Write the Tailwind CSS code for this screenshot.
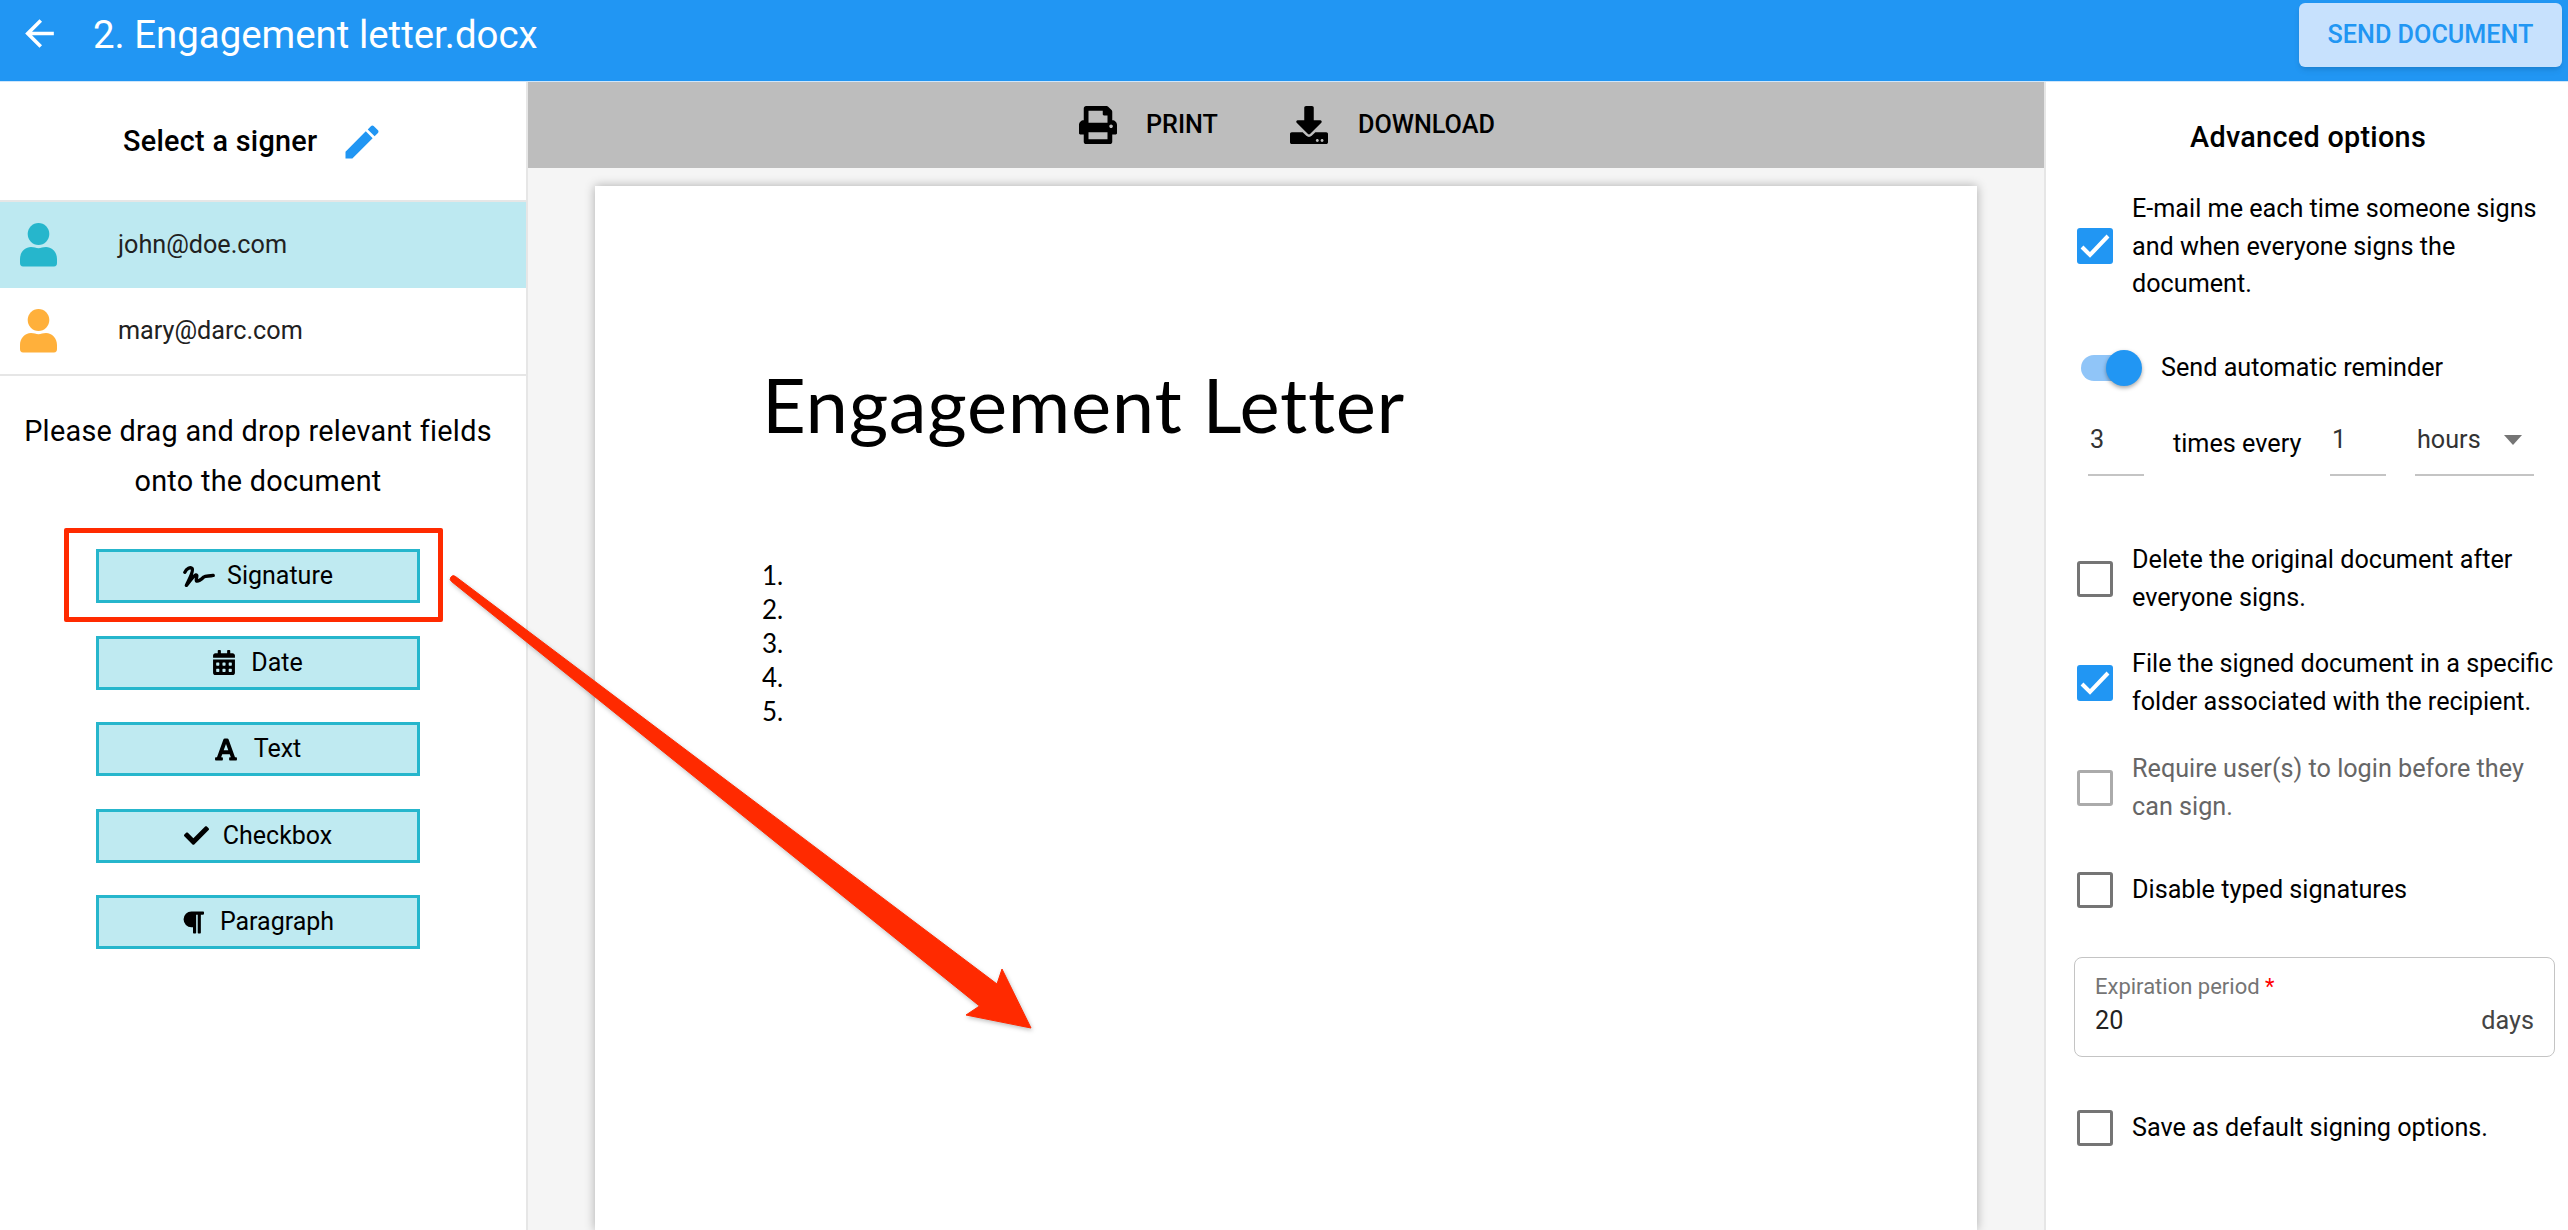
<!DOCTYPE html>
<html lang="en">
<head>
  <meta charset="UTF-8" />
  <meta name="viewport" content="width=device-width, initial-scale=1.0" />
  <title>Engagement letter.docx</title>
  <script src="https://cdn.jsdelivr.net/npm/@tailwindcss/browser@4"></script>
</head>
<body class="relative h-[1230px] overflow-hidden bg-white font-['Roboto',sans-serif] text-black">
  <!-- Header -->
  <header class="flex h-[82px] items-start border-b border-[#cfe6fb] bg-[#2196f3] text-white">
    <svg viewBox="0 0 24 24" fill="white" class="ml-[18px] mt-[12px] h-[43px] w-[43px]"><path d="M20 11H7.83l5.59-5.59L12 4l-8 8 8 8 1.41-1.41L7.83 13H20v-2z" /></svg>
    <h1 class="ml-[32px] mt-[11px] text-[38.4px] leading-[48px]">2. Engagement letter.docx</h1>
    <button class="ml-auto mr-[6px] mt-[3px] h-[64px] w-[263px] rounded-[6px] bg-[#c7e1fd] text-[25.2px] font-medium text-[#2196f3] shadow-md">SEND DOCUMENT</button>
  </header>

  <main class="flex h-[1148px]">
    <!-- Signers and fields -->
    <aside class="w-[528px] shrink-0 border-r-2 border-[#e6e6e6]">
      <div class="flex h-[118px] items-center pl-[123px] pt-[2px]">
        <span class="text-[28.8px] font-medium tracking-[0.01em]">Select a signer</span>
        <svg viewBox="0 0 24 24" fill="#2196f3" class="ml-[22px] h-[44px] w-[44px]"><path d="M3 17.25V21h3.75L17.81 9.94l-3.75-3.75L3 17.25zM20.71 7.04c.39-.39.39-1.02 0-1.41l-2.34-2.34c-.39-.39-1.02-.39-1.41 0l-1.83 1.83 3.75 3.75 1.83-1.83z" /></svg>
      </div>
      <div class="border-y-2 border-[#e6e6e6]">
        <div class="flex h-[86px] items-center bg-[#bde9f1] pl-[20px]">
          <svg viewBox="0 0 37 44" fill="#26b6cc" class="h-[44px] w-[37px]"><ellipse cx="18.5" cy="11" rx="10.8" ry="11" /><path d="M0 36c0-7 5-12 11-12 3 0 5 1.200 7.500 1.200S23 24 26 24c6 0 11 5 11 12v4c0 2-1 3.500-3 3.500H3c-2 0-3-1.500-3-3.500z" /></svg>
          <span class="ml-[61px] text-[25.2px] text-[#212121]">john@doe.com</span>
        </div>
        <div class="flex h-[86px] items-center pl-[20px]">
          <svg viewBox="0 0 37 44" fill="#ffb03b" class="h-[44px] w-[37px]"><ellipse cx="18.5" cy="11" rx="10.8" ry="11" /><path d="M0 36c0-7 5-12 11-12 3 0 5 1.200 7.500 1.200S23 24 26 24c6 0 11 5 11 12v4c0 2-1 3.500-3 3.500H3c-2 0-3-1.500-3-3.500z" /></svg>
          <span class="ml-[61px] text-[25.2px] text-[#212121]">mary@darc.com</span>
        </div>
      </div>
      <p class="mt-[30px] pr-[10px] text-center text-[28.8px] leading-[50px] tracking-[0.01em]">Please drag and drop relevant fields<br />onto the document</p>
      <div class="ml-[96px] mt-[43px] flex w-[324px] flex-col gap-[32.5px] text-[25px]">
        <button class="flex h-[54px] items-center justify-center border-[3px] border-[#26b6cc] bg-[#bfeaf1]">
          <svg viewBox="0 0 30 20" fill="none" stroke="black" stroke-width="3.200" stroke-linecap="round" stroke-linejoin="round" class="mr-[12px] h-[21px] w-[32px]"><path d="M1.500 6C3 2.500 7 .5 8.500 2.500 10 5 6 12 3 18.500 7 13.500 10 9 12 8.500c2-.5 0 3.500.5 5.500 1 1.500 5-1.500 7-3.500 2-1.500 5-.5 9-1.500" /></svg>
          Signature
        </button>
        <button class="flex h-[54px] items-center justify-center border-[3px] border-[#26b6cc] bg-[#bfeaf1]">
          <svg viewBox="0 0 448 512" class="mr-[16px] h-[25px] w-[22px]"><path d="M0 464c0 26.500 21.500 48 48 48h352c26.500 0 48-21.500 48-48V192H0v272zm320-196c0-6.600 5.400-12 12-12h40c6.600 0 12 5.400 12 12v40c0 6.600-5.400 12-12 12h-40c-6.600 0-12-5.400-12-12v-40zm0 128c0-6.600 5.400-12 12-12h40c6.600 0 12 5.400 12 12v40c0 6.600-5.400 12-12 12h-40c-6.600 0-12-5.400-12-12v-40zM192 268c0-6.600 5.400-12 12-12h40c6.600 0 12 5.400 12 12v40c0 6.600-5.400 12-12 12h-40c-6.600 0-12-5.400-12-12v-40zm0 128c0-6.600 5.400-12 12-12h40c6.600 0 12 5.400 12 12v40c0 6.600-5.400 12-12 12h-40c-6.600 0-12-5.400-12-12v-40zM64 268c0-6.600 5.400-12 12-12h40c6.600 0 12 5.400 12 12v40c0 6.600-5.400 12-12 12H76c-6.600 0-12-5.400-12-12v-40zm0 128c0-6.600 5.400-12 12-12h40c6.600 0 12 5.400 12 12v40c0 6.600-5.400 12-12 12H76c-6.600 0-12-5.400-12-12v-40zM400 64h-48V16c0-8.800-7.200-16-16-16h-32c-8.800 0-16 7.200-16 16v48H160V16c0-8.800-7.200-16-16-16h-32c-8.800 0-16 7.200-16 16v48H48C21.500 64 0 85.500 0 112v48h448v-48c0-26.500-21.500-48-48-48z" /></svg>
          Date
        </button>
        <button class="flex h-[54px] items-center justify-center border-[3px] border-[#26b6cc] bg-[#bfeaf1]">
          <svg viewBox="0 0 448 512" class="mr-[17px] h-[25px] w-[22px]"><path d="M432 416h-23.410L277.880 53.690A32 32 0 0 0 247.580 32h-47.160a32 32 0 0 0-30.300 21.690L39.410 416H16a16 16 0 0 0-16 16v32a16 16 0 0 0 16 16h128a16 16 0 0 0 16-16v-32a16 16 0 0 0-16-16h-19.580l23.300-64h152.560l23.300 64H304a16 16 0 0 0-16 16v32a16 16 0 0 0 16 16h128a16 16 0 0 0 16-16v-32a16 16 0 0 0-16-16zM176.850 272L224 142.510 271.150 272z" /></svg>
          Text
        </button>
        <button class="flex h-[54px] items-center justify-center border-[3px] border-[#26b6cc] bg-[#bfeaf1]">
          <svg viewBox="0 0 512 512" class="mr-[14px] h-[25px] w-[25px]"><path d="M173.898 439.404l-166.400-166.400c-9.997-9.997-9.997-26.206 0-36.204l36.203-36.204c9.997-9.998 26.207-9.998 36.204 0L192 312.690 432.095 72.596c9.997-9.997 26.207-9.997 36.204 0l36.203 36.204c9.997 9.997 9.997 26.206 0 36.204l-294.400 294.401c-9.998 9.997-26.207 9.997-36.204-.001z" /></svg>
          Checkbox
        </button>
        <button class="flex h-[54px] items-center justify-center border-[3px] border-[#26b6cc] bg-[#bfeaf1]">
          <svg viewBox="0 0 448 512" class="mr-[16px] h-[27px] w-[22px]"><path d="M448 48v32a16 16 0 0 1-16 16h-48v368a16 16 0 0 1-16 16h-32a16 16 0 0 1-16-16V96h-32v368a16 16 0 0 1-16 16h-32a16 16 0 0 1-16-16V352h-32a160 160 0 0 1 0-320h240a16 16 0 0 1 16 16z" /></svg>
          Paragraph
        </button>
      </div>
    </aside>

    <!-- Document preview -->
    <section class="flex min-w-0 flex-1 flex-col bg-[#f5f5f5]">
      <div class="flex h-[86px] shrink-0 items-center bg-[#bdbdbd] pl-[551px] text-[25.2px] font-medium">
        <svg viewBox="0 0 512 512" class="h-[38px] w-[38px]"><path d="M448 192V77.250c0-8.490-3.370-16.620-9.370-22.630L393.370 9.370c-6-6-14.140-9.370-22.630-9.370H96C78.330 0 64 14.330 64 32v160c-35.350 0-64 28.650-64 64v112c0 8.840 7.160 16 16 16h48v96c0 17.670 14.330 32 32 32h320c17.670 0 32-14.330 32-32v-96h48c8.840 0 16-7.160 16-16V256c0-35.350-28.650-64-64-64zm-64 256H128v-96h256v96zm0-224H128V64h192v48c0 8.840 7.160 16 16 16h48v96zm48 72c-13.250 0-24-10.750-24-24 0-13.260 10.750-24 24-24s24 10.740 24 24c0 13.250-10.750 24-24 24z" /></svg>
        <span class="ml-[29px]">PRINT</span>
        <svg viewBox="0 0 512 512" class="ml-[72px] h-[38px] w-[38px]"><path d="M216 0h80c13.300 0 24 10.700 24 24v168h87.700c17.800 0 26.700 21.500 14.100 34.100L269.700 378.300c-7.500 7.500-19.800 7.500-27.300 0L90.100 226.100c-12.600-12.600-3.700-34.100 14.100-34.100H192V24c0-13.300 10.700-24 24-24zm296 376v112c0 13.300-10.700 24-24 24H24c-13.300 0-24-10.700-24-24V376c0-13.300 10.700-24 24-24h146.700l49 49c20.100 20.100 52.500 20.100 72.600 0l49-49H488c13.300 0 24 10.700 24 24zm-124 88c0-11-9-20-20-20s-20 9-20 20 9 20 20 20 20-9 20-20zm64 0c0-11-9-20-20-20s-20 9-20 20 9 20 20 20 20-9 20-20z" /></svg>
        <span class="ml-[30px]">DOWNLOAD</span>
      </div>
      <div class="mx-[67px] mt-[18px] h-[1200px] bg-white pl-[167px] pt-[173px] font-['Lato',sans-serif] shadow-[0_0_10px_rgba(0,0,0,0.3)]">
        <h2 class="text-[76px] leading-[90px] tracking-[0.7px]">Engagement Letter</h2>
        <ol class="mt-[109px] text-[26px] leading-[34px]">
          <li>1.</li>
          <li>2.</li>
          <li>3.</li>
          <li>4.</li>
          <li>5.</li>
        </ol>
      </div>
    </section>

    <!-- Advanced options -->
    <aside class="w-[524px] shrink-0 border-l-2 border-[#e6e6e6] bg-white text-[25.2px] leading-[38px]">
      <h3 class="flex h-[110px] items-center pl-[144px] text-[28.8px] font-medium tracking-[0.01em]">Advanced options</h3>
      <label class="-mt-[2px] flex items-center pl-[31px]">
        <span class="flex h-[36px] w-[36px] shrink-0 items-center justify-center rounded-[3px] bg-[#2196f3]"><svg viewBox="0 0 36 36" fill="none" stroke="white" stroke-width="4" class="h-[36px] w-[36px]"><path d="M5 19l8 8L31 8" /></svg></span>
        <span class="ml-[19px] w-[440px] leading-[37.500px]">E-mail me each time someone signs<br />and when everyone signs the<br />document.</span>
      </label>
      <div class="mt-[42px] flex h-[46px] items-center pl-[35px]">
        <span class="relative block h-[26px] w-[59px] rounded-full bg-[#90c5f8]">
          <span class="absolute -top-[5px] left-[25px] block h-[36px] w-[36px] rounded-full bg-[#2196f3] shadow-[0_2px_4px_rgba(0,0,0,0.35)]"></span>
        </span>
        <span class="ml-[21px]">Send automatic reminder</span>
      </div>
      <div class="flex h-[85px] items-end pl-[42px] text-[#333333]">
        <div class="h-[85px] w-[56px] border-b-2 border-[#c4c4c4] pl-[2px] pt-[30px]">3</div>
        <div class="ml-[29px] w-[128px] whitespace-nowrap pb-[13px] text-black">times every</div>
        <div class="ml-[29px] h-[85px] w-[56px] border-b-2 border-[#c4c4c4] pl-[2px] pt-[30px]">1</div>
        <div class="ml-[29px] flex h-[85px] w-[119px] items-start justify-between border-b-2 border-[#c4c4c4] pl-[2px] pr-[12px] pt-[30px]">
          <span>hours</span>
          <svg viewBox="0 0 18 10" fill="#757575" class="mt-[14px] h-[10px] w-[18px]"><path d="M0 0h18L9 10z" /></svg>
        </div>
      </div>
      <label class="mt-[65px] flex items-center pl-[31px]">
        <span class="h-[36px] w-[36px] shrink-0 rounded-[3px] border-[3px] border-[#757575]"></span>
        <span class="ml-[19px]">Delete the original document after<br />everyone signs.</span>
      </label>
      <label class="mt-[28px] flex items-center pl-[31px]">
        <span class="flex h-[36px] w-[36px] shrink-0 items-center justify-center rounded-[3px] bg-[#2196f3]"><svg viewBox="0 0 36 36" fill="none" stroke="white" stroke-width="4" class="h-[36px] w-[36px]"><path d="M5 19l8 8L31 8" /></svg></span>
        <span class="ml-[19px] whitespace-nowrap">File the signed document in a specific<br />folder associated with the recipient.</span>
      </label>
      <label class="mt-[29px] flex items-center pl-[31px] text-[#666666]">
        <span class="h-[36px] w-[36px] shrink-0 rounded-[3px] border-[3px] border-[#ababab]"></span>
        <span class="ml-[19px]">Require user(s) to login before they<br />can sign.</span>
      </label>
      <label class="mt-[45px] flex items-center pl-[31px]">
        <span class="h-[36px] w-[36px] shrink-0 rounded-[3px] border-[3px] border-[#757575]"></span>
        <span class="ml-[19px]">Disable typed signatures</span>
      </label>
      <div class="ml-[28px] mt-[48px] h-[100px] w-[481px] rounded-[8px] border border-[#c4c4c4] px-[20px] pt-[17px]">
        <div class="text-[22px] leading-[24px] text-[#757575]">Expiration period <span class="text-[#ff0000]">*</span></div>
        <div class="mt-[6px] flex items-center justify-between text-[25.2px] leading-[32px] text-[#222222]">
          <span>20</span>
          <span class="text-[#444444]">days</span>
        </div>
      </div>
      <label class="mt-[52px] flex items-center pl-[31px]">
        <span class="h-[36px] w-[36px] shrink-0 rounded-[3px] border-[3px] border-[#757575]"></span>
        <span class="ml-[19px]">Save as default signing options.</span>
      </label>
    </aside>
  </main>

  <!-- Red annotation drawn over the page -->
  <div class="absolute left-[64px] top-[528px] h-[94px] w-[379px] rounded-[2px] border-[5.5px] border-[#ff2a00]"></div>
  <svg viewBox="0 0 2568 1230" class="pointer-events-none absolute inset-0 h-[1230px] w-[2568px] drop-shadow-[1px_2px_2px_rgba(0,0,0,0.25)]">
    <path fill="#ff2a00" stroke="#ff2a00" stroke-width="1" stroke-linejoin="round" d="M455.500 576.500L997 984l5-15 29 59-65-13 13.500-9L451.500 581.500a2.800 2.800 0 0 1 4-5z" />
  </svg>
</body>
</html>
